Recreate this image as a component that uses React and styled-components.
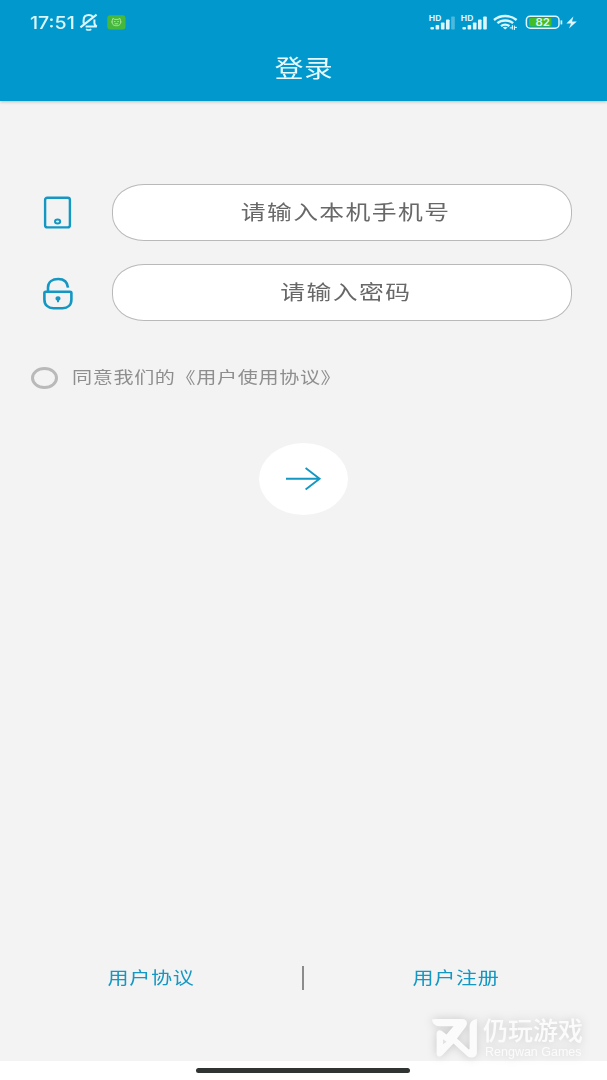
import React, { useState } from "react";

import styled, { createGlobalStyle } from "styled-components";

const colors = {
  main: "#0199cd",
  icon: "#1497c3",
  page: "#f3f3f3",
  status: "#dcf6fb",
};

const GlobalStyle = createGlobalStyle`
  * {
    box-sizing: border-box;
  }

  body {
    margin: 0;
    background-color: #fff;
    font-family: "Noto Sans", "Noto Sans CJK SC", sans-serif;
  }

  button {
    padding: 0;
    border: none;
    background: none;
    font-family: inherit;
    cursor: pointer;
  }
`;

const Screen = styled.div`
  width: 607px;
  height: 1080px;
  display: flex;
  flex-direction: column;
  overflow: hidden;
`;

const Header = styled.header`
  height: 101px;
  flex-shrink: 0;
  background-color: ${colors.main};
  box-shadow: 0 1px 3px rgba(0, 0, 0, 0.22);
  z-index: 1;
`;

const StatusBar = styled.div`
  height: 44px;
  padding: 0 30px;
  display: flex;
  justify-content: space-between;
  align-items: center;
  color: ${colors.status};

  svg {
    display: block;
  }
`;

// Wide lettering used across the whole app
const Wide = styled.span`
  display: inline-block;
  white-space: nowrap;
  line-height: 1;
  padding-bottom: ${(props) => props.$lift || 0}px;
  font-family: "Noto Sans CJK SC", sans-serif;
  font-size: ${(props) => props.$size}px;
  letter-spacing: ${(props) => props.$spacing || 0}px;
  transform: scaleX(${(props) => props.$stretch || 1.24});
  transform-origin: ${(props) => props.$origin || "center"};
`;

const Time = styled.span`
  width: 49px;
  padding-top: 1px;
  font-family: Inter, sans-serif;
  font-size: 17px;
  font-weight: 500;
  line-height: 44px;
  white-space: nowrap;
  transform: scaleX(1.15);
  transform-origin: left;
`;

const StatusGroup = styled.div`
  display: flex;
  align-items: center;
  margin-left: ${(props) => props.$left || 0}px;
  margin-right: ${(props) => props.$right || 0}px;
`;

const Title = styled.h1`
  height: 48px;
  margin: 0;
  display: flex;
  justify-content: center;
  align-items: center;
  color: #e6fbff;
  font-weight: 400;
`;

const Main = styled.main`
  height: 960px;
  flex-shrink: 0;
  padding-top: 83px;
  display: flex;
  flex-direction: column;
  background-color: ${colors.page};
`;

const Form = styled.div`
  display: flex;
  flex-direction: column;
  gap: 23px;
`;

const Row = styled.div`
  padding-left: 38px;
  display: flex;
  align-items: center;
`;

const RowIcon = styled.div`
  width: 74px;
  height: 40px;

  svg {
    display: block;
  }
`;

const Field = styled.div`
  width: 460px;
  height: 57px;
  padding-left: 8px;
  display: flex;
  justify-content: center;
  align-items: center;
  background-color: #fff;
  border: 1px solid #b9b9b9;
  border-radius: 32px / 26px;
  color: #686868;
`;

const Agreement = styled.label`
  margin-top: 45px;
  padding-left: 31px;
  height: 24px;
  display: flex;
  align-items: center;
  gap: 14px;
  color: #8e8e8e;
  cursor: pointer;
`;

const Radio = styled.button`
  width: 27px;
  height: 22px;
  border: 3px solid #b9b9b9;
  border-radius: 50%;
  background-color: ${(props) => (props.$checked ? colors.main : "transparent")};
`;

const Submit = styled.button`
  width: 89px;
  height: 72px;
  margin: 53px auto 0;
  display: flex;
  justify-content: center;
  align-items: center;
  border-radius: 50%;
  background-color: #fff;
`;

const Links = styled.div`
  height: 24px;
  margin: auto 0 71px;
  display: flex;
  align-items: center;
`;

const Link = styled.button`
  flex: 1;
  height: 24px;
  display: flex;
  justify-content: center;
  align-items: center;
  color: ${colors.icon};
`;

const Divider = styled.div`
  width: 2px;
  height: 24px;
  margin: 0 1px 0 -1px;
  background-color: #8b8b8b;
`;

const NavigationBar = styled.footer`
  flex: 1;
  display: flex;
  justify-content: center;
  padding-top: 7px;
  background-color: #fff;
`;

const HomeIndicator = styled.div`
  width: 214px;
  height: 5px;
  margin-right: 1px;
  border-radius: 3px;
  background-color: #303433;
`;

// Lies over the bottom right corner of the screen
const Watermark = styled.div`
  position: absolute;
  left: 431px;
  top: 1015px;
  display: flex;
  gap: 5px;
  color: #fbfbfb;
  filter: drop-shadow(0 0 5px rgba(0, 0, 0, 0.18));
`;

const WatermarkText = styled.div`
  display: flex;
  flex-direction: column;
`;

const WatermarkName = styled.span`
  font-family: "Noto Sans CJK SC", sans-serif;
  font-size: 25px;
  font-weight: 500;
  line-height: 28px;
`;

const WatermarkLatin = styled.span`
  padding: 1px 0 0 2px;
  font-family: "Liberation Sans", sans-serif;
  font-size: 12.5px;
  line-height: 16px;
`;

const BellOffIcon = () => (
  <svg width="20" height="18" viewBox="0 0 20 18" fill="none" stroke="currentColor" strokeWidth="2">
    <path d="M4.6 10.4V7.4C4.6 4 6.6 2 9.8 2c1.7 0 3 .6 3.9 1.6M15.4 6.6v3.2c0 1.8.8 2.9 2.4 3.6H6.6M1.4 14.4L17.6 1.6" />
    <path d="M7 16.2c1.6.9 3.7.9 5.3 0" strokeWidth="1.6" />
  </svg>
);

const AppBadge = () => (
  <svg width="19" height="15" viewBox="0 0 19 15" fill="none">
    <rect x="0.3" y="0.3" width="18.2" height="14.2" rx="3" fill="#46b93c" />
    <path d="M5.3 5.4l.6-2 1.8 1h3.4l1.8-1 .6 2c.6 3.8-.8 5.3-4.1 5.3S4.7 9.2 5.3 5.4z" stroke="#b7e8a8" strokeWidth="0.9" />
    <path d="M4.2 6.9h1.4M13.2 6.9h1.4M7 6.6h1.5M10.3 6.6h1.5M7.6 8.8h3.6" stroke="#b7e8a8" strokeWidth="0.9" />
  </svg>
);

const SignalIcon = ({ weak }) => (
  <svg width="28" height="17" viewBox="0 0 28 17" fill="currentColor">
    <text x="0.8" y="7" fontFamily="Inter, sans-serif" fontSize="7.8" fontWeight="700" textLength="12.5" lengthAdjust="spacingAndGlyphs">
      HD
    </text>
    <rect x="2.4" y="13" width="3.6" height="2.5" rx="1" />
    <rect x="7.6" y="10.9" width="3.6" height="4.6" rx="0.8" />
    <rect x="12.9" y="8.5" width="3.6" height="7" rx="0.8" />
    <rect x="18" y="5.5" width="3.6" height="10" rx="0.8" />
    <rect x="23.2" y="2.5" width="3.6" height="13" rx="0.8" opacity={weak ? 0.35 : 1} />
  </svg>
);

const WifiIcon = () => (
  <svg width="25" height="16" viewBox="0 0 25 16" fill="none" stroke="currentColor" strokeWidth="2.4">
    <path d="M1 6C7.2.6 17.4.6 23.6 6M4.4 9.2c4.3-3.7 11.4-3.7 15.7 0M8 12.1c2.4-1.9 6-1.9 8.4 0" />
    <path d="M9.8 13.6c1.4-1 3.4-1 4.8 0L12.2 15.6z" fill="currentColor" stroke="none" />
    <path d="M16.8 13.9h2.6v-2.6M21.4 16v-2.6h2.6M19.4 11.6v4M21.4 11.6v4" strokeWidth="1" />
  </svg>
);

const BatteryIcon = () => (
  <svg width="52" height="16" viewBox="0 0 52 16" fill="none">
    <rect x="1.4" y="2.2" width="32.6" height="12" rx="3.8" stroke="currentColor" strokeWidth="1.5" />
    <path d="M6 4H26.5v8.4H6c-1.4 0-2-.7-2-2V6c0-1.3.7-2 2-2z" fill="#43bd24" />
    <path d="M36.4 6.4v4" stroke="currentColor" strokeWidth="1.7" />
    <text x="10.4" y="12" fill="currentColor" fontFamily="Inter, sans-serif" fontSize="10.5" fontWeight="600" textLength="14.5" lengthAdjust="spacingAndGlyphs">
      82
    </text>
    <path d="M48.4 2.6L41.4 9.4h4.6l-2 5.2 7.8-7.2h-4.8z" fill="currentColor" />
  </svg>
);

const PhoneIcon = () => (
  <svg width="40" height="40" viewBox="0 0 40 40" fill="none" stroke={colors.icon}>
    <rect x="7.1" y="4.8" width="24.8" height="29.6" rx="2.2" strokeWidth="2.4" />
    <ellipse cx="19.6" cy="28.5" rx="2.6" ry="2" strokeWidth="2" />
  </svg>
);

const LockIcon = () => (
  <svg width="40" height="40" viewBox="0 0 40 40" fill="none" stroke={colors.icon} strokeWidth="2.6">
    <path d="M10 18.5v-4.1C10 9 14.4 6 20.2 6c5.4 0 9.3 2.8 9.8 8.7" />
    <path d="M7.7 18.7h24.4c.8 0 1.3.6 1.3 1.4v6.3c0 5.6-3.7 8.8-8.8 8.8h-9.3c-5.1 0-8.9-3.2-8.9-8.8v-6.3c0-.8.5-1.4 1.3-1.4z" />
    <path d="M20 23.2c1.5 0 2.5.9 2.5 2.2 0 .9-.5 1.5-1.2 1.9l-.5 2h-1.6l-.5-2c-.7-.4-1.2-1-1.2-1.9 0-1.3 1-2.2 2.5-2.2z" fill={colors.icon} stroke="none" />
  </svg>
);

const ArrowIcon = () => (
  <svg width="36" height="24" viewBox="0 0 36 24" fill="none" stroke={colors.icon} strokeWidth="1.9">
    <path d="M0 11.8H33.4M19.6 1L33.6 11.8 19.6 22.6" />
  </svg>
);

const WatermarkLogo = () => (
  <svg width="47" height="43" viewBox="0 0 47 43" fill="currentColor">
    <path d="M4.5 4H31c4.8 0 6.4 4.2 3.6 8L26 23.4l11.4 10.8c.7.5 1.2.2 1.2-.6V12.5C38.6 7.6 41 4.8 45.9 4v33.4c0 5-6.3 6.9-10 3.3L22.5 28.6 11.2 40.2c-2.3 2.4-5.6 1.5-5.6-1.8V19.2c0-3.3 2.6-5.1 5.2-3.3l4.7 3.6 7-8.3H8.2C4.2 11.2 1.5 8.7 1 4.6z" />
    <path d="M12 24.3v5l3.6-2.5z" fill="#e2e2e2" />
  </svg>
);

const App = () => {
  const [agreed, setAgreed] = useState(false);

  return (
    <>
      <GlobalStyle />
      <Screen>
        <Header>
          <StatusBar>
            <StatusGroup>
              <Time>17:51</Time>
              <BellOffIcon />
              <StatusGroup $left={8}>
                <AppBadge />
              </StatusGroup>
            </StatusGroup>
            <StatusGroup>
              <SignalIcon weak />
              <StatusGroup $left={4} $right={5}>
                <SignalIcon />
              </StatusGroup>
              <WifiIcon />
              <StatusGroup $left={7}>
                <BatteryIcon />
              </StatusGroup>
            </StatusGroup>
          </StatusBar>
          <Title>
            <Wide $size={23.5} $stretch={1.22} $spacing={0.5}>登录</Wide>
          </Title>
        </Header>
        <Main>
          <Form>
            <Row>
              <RowIcon>
                <PhoneIcon />
              </RowIcon>
              <Field>
                <Wide $size={20} $spacing={1.15} $lift={2}>请输入本机手机号</Wide>
              </Field>
            </Row>
            <Row>
              <RowIcon>
                <LockIcon />
              </RowIcon>
              <Field>
                <Wide $size={20} $spacing={1.15} $lift={1}>请输入密码</Wide>
              </Field>
            </Row>
          </Form>
          <Agreement>
            <Radio $checked={agreed} onClick={() => setAgreed(!agreed)} />
            <Wide $size={16.2} $spacing={0.52} $origin="left" $lift={4}>
              同意我们的《用户使用协议》
            </Wide>
          </Agreement>
          <Submit>
            <ArrowIcon />
          </Submit>
          <Links>
            <Link>
              <Wide $size={17} $spacing={0.5} $lift={3}>用户协议</Wide>
            </Link>
            <Divider />
            <Link>
              <Wide $size={17} $spacing={0.5} $lift={3}>用户注册</Wide>
            </Link>
          </Links>
        </Main>
        <NavigationBar>
          <HomeIndicator />
        </NavigationBar>
      </Screen>
      <Watermark>
        <WatermarkLogo />
        <WatermarkText>
          <WatermarkName>仍玩游戏</WatermarkName>
          <WatermarkLatin>Rengwan Games</WatermarkLatin>
        </WatermarkText>
      </Watermark>
    </>
  );
};

export default App;
